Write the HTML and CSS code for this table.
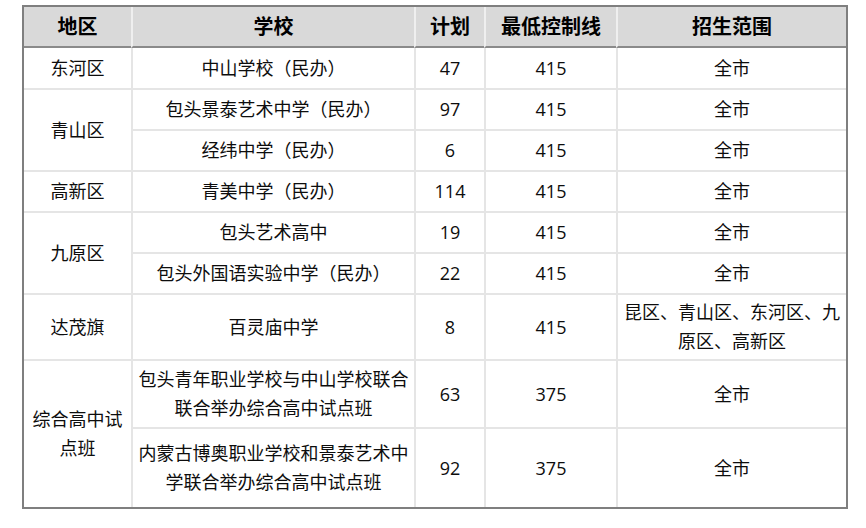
FILE: index.html
```html
<!DOCTYPE html>
<html lang="zh-CN">
<head>
<meta charset="utf-8">
<title>招生计划</title>
<link rel="stylesheet" href="styles.css">
</head>
<body>
<div class="page">
<table class="plan">
  <colgroup>
    <col class="c1"><col class="c2"><col class="c3"><col class="c4"><col class="c5">
  </colgroup>
  <thead>
    <tr class="h-head">
      <th>地区</th><th>学校</th><th>计划</th><th>最低控制线</th><th>招生范围</th>
    </tr>
  </thead>
  <tbody>
    <tr class="h-first">
      <td class="first">东河区</td><td>中山学校（民办）</td><td>47</td><td>415</td><td>全市</td>
    </tr>
    <tr class="h-row">
      <td class="first" rowspan="2">青山区</td><td>包头景泰艺术中学（民办）</td><td>97</td><td>415</td><td>全市</td>
    </tr>
    <tr class="h-row">
      <td>经纬中学（民办）</td><td>6</td><td>415</td><td>全市</td>
    </tr>
    <tr class="h-row">
      <td class="first">高新区</td><td>青美中学（民办）</td><td>114</td><td>415</td><td>全市</td>
    </tr>
    <tr class="h-row">
      <td class="first" rowspan="2">九原区</td><td>包头艺术高中</td><td>19</td><td>415</td><td>全市</td>
    </tr>
    <tr class="h-row">
      <td>包头外国语实验中学（民办）</td><td>22</td><td>415</td><td>全市</td>
    </tr>
    <tr class="h-dm">
      <td class="first">达茂旗</td><td>百灵庙中学</td><td>8</td><td>415</td><td>昆区、青山区、东河区、九原区、高新区</td>
    </tr>
    <tr class="h-z1">
      <td class="first" rowspan="2">综合高中试点班</td><td>包头青年职业学校与中山学校联合联合举办综合高中试点班</td><td>63</td><td>375</td><td>全市</td>
    </tr>
    <tr class="h-z2">
      <td>内蒙古博奥职业学校和景泰艺术中学联合举办综合高中试点班</td><td>92</td><td>375</td><td>全市</td>
    </tr>
  </tbody>
</table>
</div>
</body>
</html>
```

FILE: styles.css
```css
html, body {
  margin: 0;
  padding: 0;
  background: #ffffff;
}

.page {
  padding: 5px 0 0 22px;
}

.plan {
  width: 826px;
  table-layout: fixed;
  border-collapse: separate;
  border-spacing: 0;
  border: 2px solid #7f7f7f;
  font-family: "Open Sans", "Noto Sans CJK SC", sans-serif;
  font-size: 18px;
  color: #0d0d0d;
}

.c1 { width: 107px; }
.c2 { width: 283px; }
.c3 { width: 70px; }
.c4 { width: 132px; }
.c5 { width: 230px; }

.plan th,
.plan td {
  padding: 0 4px;
  text-align: center;
  vertical-align: middle;
  line-height: 29px;
  border-left: 2px solid #e5e5e5;
  border-top: 2px solid #e5e5e5;
}

.plan th {
  background: #d9d9d9;
  font-size: 20px;
  font-weight: bold;
  color: #000000;
  border-top: 0;
  border-left-color: #efefef;
  border-bottom: 2px solid #8a8a8a;
}

.plan th:first-child,
.plan td.first {
  border-left: 0;
}

.h-first td {
  border-top: 0;
}

.h-head { height: 41px; }
.h-first { height: 40px; }
.h-row { height: 41px; }
.h-dm { height: 66px; }
.h-z1 { height: 68px; }
.h-z2 { height: 80px; }
```
